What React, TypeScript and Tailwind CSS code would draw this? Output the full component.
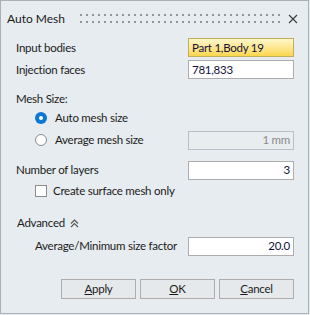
import React from 'react';

const font = { fontFamily: 'Lato, "Segoe UI", "Liberation Sans", sans-serif' };

const Field = ({ children, className = '' }: { children?: React.ReactNode; className?: string }) => (
  <div className={`w-[106px] h-[19px] border flex items-center px-[3px] ${className}`}>{children}</div>
);

const Radio = ({ checked }: { checked?: boolean }) =>
  checked ? (
    <span className="w-[12px] h-[12px] rounded-full bg-[#0a78d4] flex items-center justify-center">
      <span className="w-[4px] h-[4px] rounded-full bg-white" />
    </span>
  ) : (
    <span className="w-[12px] h-[12px] rounded-full bg-white border border-[#8c8c8c]" />
  );

const Btn = ({ mn, rest }: { mn: string; rest: string }) => (
  <button className="w-[75px] h-[20px] border border-[#adadad] bg-[#e6e9ec] text-[#1b1b1b] flex items-center justify-center">
    <span className="underline underline-offset-[1px]">{mn}</span>
    {rest}
  </button>
);

export default function App() {
  return (
    <div className="w-[310px] h-[315px] bg-[#e8edf0]" style={font}>
      <div className="w-[309px] h-[314px] border border-[#a9b1b8] bg-[#e6ecf0] flex flex-col text-[11.5px] tracking-[-0.25px] text-[#1b1b1b] whitespace-nowrap">
        {/* Title bar */}
        <div className="h-[36px] flex items-center pl-[6px] pr-[10px]">
          <span className="w-[73px] text-[12px] tracking-[0px] text-[#1b1b1b]">Auto Mesh</span>
          <svg width="200" height="10" className="shrink-0">
            <defs>
              <pattern id="dots" width="6" height="7" patternUnits="userSpaceOnUse">
                <rect x="0" y="0" width="2" height="2" fill="#8f969d" />
              </pattern>
            </defs>
            <rect x="0" y="0" width="200" height="9" fill="url(#dots)" />
          </svg>
          <svg width="10" height="10" viewBox="0 0 10 10" className="ml-auto">
            <path d="M1 1 L9 9 M9 1 L1 9" stroke="#3c3c3c" strokeWidth="1.1" />
          </svg>
        </div>

        {/* Input bodies */}
        <div className="mt-[1px] h-[19px] flex items-center justify-between pl-[15px] pr-[14px]">
          <span>Input bodies</span>
          <Field className="border-[#c3ad5a] bg-gradient-to-b from-[#fff7c8] to-[#fcd64a] text-[#10103a]">Part 1,Body 19</Field>
        </div>
        <div className="mt-[3px] h-[19px] flex items-center justify-between pl-[15px] pr-[14px]">
          <span>Injection faces</span>
          <Field className="border-[#adadad] bg-white text-[#10103a]">781,833</Field>
        </div>

        {/* Mesh size */}
        <div className="mt-[12px] h-[16px] flex items-center pl-[15px]">Mesh Size:</div>
        <div className="mt-[1px] h-[20px] flex items-center pl-[34px] gap-[8px]">
          <Radio checked />
          <span>Auto mesh size</span>
        </div>
        <div className="mt-[2px] h-[20px] flex items-center pl-[34px] pr-[14px]">
          <Radio />
          <span className="ml-[8px]">Average mesh size</span>
          <Field className="ml-auto h-[18px] border-[#b9bfc4] bg-[#e8edf0] text-[#8a8a8a] justify-end">1 mm</Field>
        </div>

        <div className="mt-[11px] h-[18px] flex items-center justify-between pl-[15px] pr-[14px]">
          <span>Number of layers</span>
          <Field className="h-[18px] border-[#adadad] bg-white text-[#10103a] justify-end">3</Field>
        </div>
        <div className="mt-[4px] h-[16px] flex items-center pl-[34px] gap-[6px]">
          <span className="w-[12px] h-[12px] bg-white border border-[#8c8c8c]" />
          <span>Create surface mesh only</span>
        </div>

        {/* Advanced */}
        <div className="mt-[16px] h-[16px] flex items-center pl-[16px] gap-[5px]">
          <span>Advanced</span>
          <svg width="9" height="9" viewBox="0 0 9 9">
            <path d="M1 4.5 L4.5 1 L8 4.5 M1 8 L4.5 4.5 L8 8" stroke="#555" strokeWidth="1.1" fill="none" />
          </svg>
        </div>
        <div className="mt-[6px] h-[18px] flex items-center justify-between pl-[34px] pr-[14px]">
          <span>Average/Minimum size factor</span>
          <Field className="h-[18px] border-[#adadad] bg-white text-[#10103a] justify-end">20.0</Field>
        </div>

        {/* Buttons */}
        <div className="mt-[24px] flex justify-end gap-[4px] pr-[14px]">
          <Btn mn="A" rest="pply" />
          <Btn mn="O" rest="K" />
          <Btn mn="C" rest="ancel" />
        </div>
      </div>
    </div>
  );
}
